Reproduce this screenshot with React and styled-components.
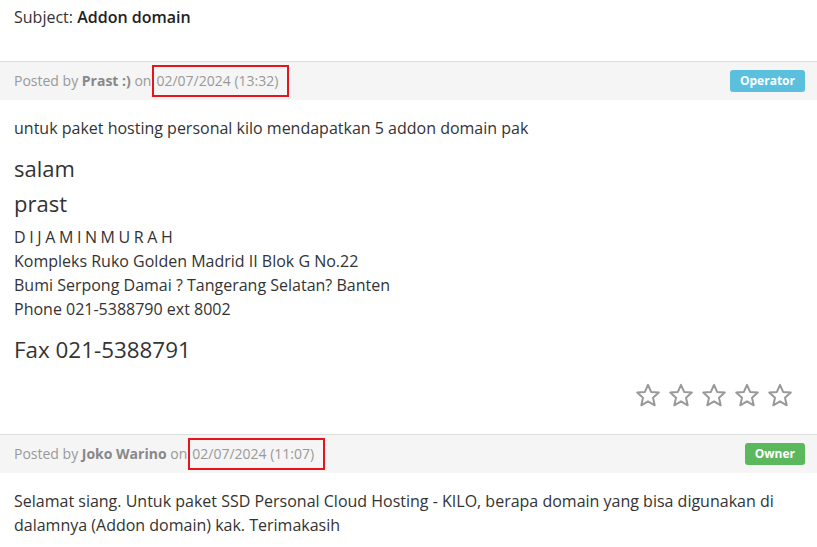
import React from 'react';
import styled, { createGlobalStyle } from 'styled-components';

const GlobalStyle = createGlobalStyle`
  body {
    margin: 0;
    background: #fff;
    font-family: "Open Sans", "Liberation Sans", sans-serif;
    color: #333;
  }
`;

const Page = styled.div`
  width: 817px;
`;

const Subject = styled.div`
  padding: 5px 14px 32px;
  font-size: 16px;
  line-height: 24px;
  strong {
    font-weight: 600;
    color: #222;
  }
`;

const PostHeader = styled.div`
  display: flex;
  align-items: center;
  justify-content: space-between;
  height: 38px;
  padding: 0 12px 0 14px;
  background: #f5f5f5;
  border-top: 1px solid #ddd;
  font-size: 14px;
  color: #999;
  strong {
    font-weight: 700;
    color: #888;
  }
`;

const DateBox = styled.span`
  display: inline-block;
  margin-left: 1px;
  padding: 5px 9px 5px 2px;
  border: 2px solid #e8141c;
  line-height: 18px;
`;

const Badge = styled.span`
  display: inline-block;
  padding: 0 10px;
  height: 22px;
  line-height: 22px;
  border-radius: 3px;
  background: ${(p) => p.$color};
  color: #fff;
  font-size: 12px;
  font-weight: 700;
`;

const PostBody = styled.div`
  padding: ${(p) => p.$pad};
  font-size: 16px;
  line-height: 24px;
`;

const Para = styled.p`
  margin: 0;
`;

const Big = styled.div`
  font-size: 22px;
  line-height: 35px;
`;

const Greeting = styled.div`
  margin-top: 10.5px;
`;

const Address = styled.div`
  margin-top: 4.5px;
`;

const Spaced = styled.div`
  letter-spacing: 3.6px;
`;

const Fax = styled.div`
  margin-top: 14px;
  font-size: 22.4px;
  line-height: 30px;
`;

const Stars = styled.div`
  display: flex;
  justify-content: flex-end;
  gap: 7px;
  margin-top: 18px;
  padding-right: 10px;
`;

const Star = () => (
  <svg width="26" height="24" viewBox="0 0 26 24">
    <path
      d="M13 1.8 L16.1 8.9 L23.8 9.6 L18 14.7 L19.7 22.3 L13 18.3 L6.3 22.3 L8 14.7 L2.2 9.6 L9.9 8.9 Z"
      fill="none"
      stroke="#999"
      strokeWidth="2"
      strokeLinejoin="round"
    />
  </svg>
);

export default function App() {
  return (
    <Page>
      <GlobalStyle />
      <Subject>
        Subject: <strong>Addon domain</strong>
      </Subject>

      <PostHeader>
        <span>
          Posted by <strong>Prast :)</strong> on<DateBox>02/07/2024 (13:32)</DateBox>
        </span>
        <Badge $color="#5bc0de">Operator</Badge>
      </PostHeader>
      <PostBody $pad="16px 14px 27px">
        <Para>untuk paket hosting personal kilo mendapatkan 5 addon domain pak</Para>
        <Greeting>
          <Big>salam</Big>
          <Big>prast</Big>
        </Greeting>
        <Address>
          <Spaced>DIJAMINMURAH</Spaced>
          <div>Kompleks Ruko Golden Madrid II Blok G No.22</div>
          <div>Bumi Serpong Damai ? Tangerang Selatan? Banten</div>
          <div>Phone 021-5388790 ext 8002</div>
        </Address>
        <Fax>Fax 021-5388791</Fax>
        <Stars>
          {[0, 1, 2, 3, 4].map((i) => (
            <Star key={i} />
          ))}
        </Stars>
      </PostBody>

      <PostHeader>
        <span>
          Posted by <strong>Joko Warino</strong> on<DateBox>02/07/2024 (11:07)</DateBox>
        </span>
        <Badge $color="#5cb85c">Owner</Badge>
      </PostHeader>
      <PostBody $pad="16px 14px">
        <Para>
          Selamat siang. Untuk paket SSD Personal Cloud Hosting - KILO, berapa domain yang bisa digunakan di
          dalamnya (Addon domain) kak. Terimakasih
        </Para>
      </PostBody>
    </Page>
  );
}
